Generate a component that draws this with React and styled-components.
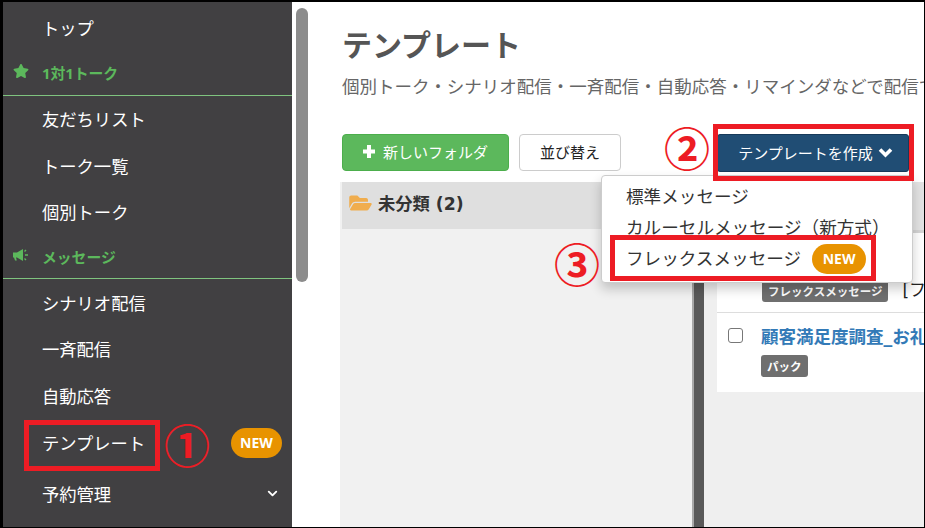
import styled, { createGlobalStyle } from "styled-components";
import { FaStar, FaFolderOpen } from "react-icons/fa";
import { LuChevronDown } from "react-icons/lu";

const FONT = `"Open Sans", "Noto Sans CJK JP", "Noto Sans", sans-serif`;
const LATIN_WIDE = `"DejaVu Sans", "Noto Sans CJK JP", sans-serif`;
const RED = "#ed1c24";

const GlobalStyle = createGlobalStyle`
  html, body {
    margin: 0;
    padding: 0;
    background: #000;
  }
  * {
    box-sizing: border-box;
  }
`;

const Frame = styled.div`
  position: relative;
  width: 925px;
  height: 528px;
  overflow: hidden;
  display: flex;
  border-top: 2px solid #000;
  border-left: 3px solid #000;
  border-right: 1px solid #000;
  border-bottom: 1px solid #000;
  background: #fff;
  font-family: ${FONT};
`;

const Sidebar = styled.nav`
  width: 289px;
  flex: none;
  padding-top: 2px;
  background: #414042;
`;

const NavRow = styled.div`
  height: ${(p) => p.$height || 46.5}px;
  margin-bottom: ${(p) => p.$after || 0}px;
  display: flex;
  align-items: center;
  padding: 0 10px 0 39px;
  color: #fff;
  font-size: 17.3px;
`;

const NavGroup = styled.div`
  height: ${(p) => p.$height}px;
  display: flex;
  align-items: center;
  padding-left: 10px;
  border-bottom: 1px solid #7fc47f;
  color: #5cb85c;
  font-size: 14.8px;
  font-weight: 700;
  svg {
    width: 16px;
    height: 16px;
    margin-right: 13px;
    transform: translateY(-2px);
  }
`;

const NewBadge = styled.span`
  display: inline-flex;
  align-items: center;
  justify-content: center;
  width: ${(p) => p.$width || 51}px;
  height: 30px;
  margin-left: ${(p) => p.$gap || "auto"};
  margin-top: ${(p) => p.$drop || 0}px;
  border-radius: 15px;
  background: #e89300;
  color: #fff;
  font-size: 14px;
  font-weight: 700;
`;

const Arrow = styled(LuChevronDown)`
  margin-left: auto;
  margin-right: 2px;
  width: 15px;
  height: 15px;
  stroke-width: 3;
`;

const Gutter = styled.div`
  width: 18px;
  flex: none;
  padding: 6px 2px 0 4px;
`;

const Thumb = styled.div`
  height: 274px;
  border-radius: 6px;
  background: #8c8c8c;
`;

const Main = styled.main`
  flex: 1;
  min-width: 0;
  display: flex;
  flex-direction: column;
  padding-top: 21px;
`;

const Title = styled.h1`
  margin: 0 0 0 32px;
  height: 45px;
  line-height: 44px;
  color: #555;
  font-size: 30px;
  font-weight: 700;
`;

const Lead = styled.p`
  margin: 0 0 0 32px;
  height: 36px;
  line-height: 36px;
  color: #666;
  font-size: 17.5px;
  white-space: nowrap;
`;

const Toolbar = styled.div`
  display: flex;
  align-items: flex-start;
  gap: 10px;
  margin: 30px 0 10px 32px;
  height: 38px;
`;

const Button = styled.button`
  height: 37px;
  display: inline-flex;
  align-items: center;
  justify-content: center;
  gap: 8px;
  padding: 0 0 2px;
  width: ${(p) => p.$width}px;
  border: 1px solid #ccc;
  border-radius: 4px;
  background: #fff;
  color: #222;
  font-family: ${FONT};
  font-size: 15px;
`;

const GreenButton = styled(Button)`
  border-color: #4cae4c;
  background: #5cb85c;
  color: #fff;
`;

const CreateButton = styled(Button)`
  height: 38px;
  gap: 5px;
  margin-left: 86px;
  padding-left: 5px;
  border: 1px solid #173a5a;
  border-radius: 3px;
  background: #204d74;
  color: #fff;
`;

const Panes = styled.div`
  flex: 1;
  min-height: 0;
  display: flex;
`;

const FolderPane = styled.section`
  width: 352px;
  margin-left: 30px;
  flex: none;
  display: flex;
  flex-direction: column;
  background: #f1f1f1;
`;

const FolderHead = styled.div`
  height: 47px;
  margin-left: 2px;
  display: flex;
  align-items: center;
  gap: 6px;
  padding: 0 0 6px 7px;
  background: #dfdfdf;
  color: #333;
  font-family: ${LATIN_WIDE};
  font-size: 17.3px;
  font-weight: 700;
  svg {
    width: 23px;
    height: 20px;
    color: #f0ad4e;
  }
`;

const Splitter = styled.div`
  width: 12px;
  flex: none;
  border-left: 2px solid #a8a8a8;
  background: #595959;
`;

const ListPane = styled.section`
  flex: 1;
  min-width: 0;
  padding-left: 13px;
  background: #efefef;
`;

const ListHead = styled.div`
  height: 51px;
  border-bottom: 3px solid #d4d4d4;
  background: #e3e3e3;
`;

const Card = styled.article`
  padding: ${(p) => p.$padding};
  height: ${(p) => p.$height}px;
  background: #fff;
  border-bottom: ${(p) => (p.$line ? "1px solid #ddd" : "0")};
`;

const CardRow = styled.div`
  display: flex;
  align-items: ${(p) => p.$align || "flex-start"};
  gap: ${(p) => p.$gap || 14}px;
  white-space: nowrap;
  color: #222;
  font-size: 17px;
`;

const Tag = styled.span`
  display: inline-flex;
  align-items: center;
  height: 22px;
  padding: 0 6px;
  border-radius: 3px;
  background: #6f6f6f;
  color: #fff;
  font-size: 11.5px;
  font-weight: 700;
`;

const CardLabel = styled.span`
  font-family: ${LATIN_WIDE};
  margin-bottom: 5px;
`;

const Check = styled.span`
  flex: none;
  width: 15px;
  height: 15px;
  margin-left: 11px;
  border: 1.5px solid #777;
  border-radius: 3px;
  background: #fff;
`;

const ItemLink = styled.a`
  color: #337ab7;
  font-family: ${LATIN_WIDE};
  font-size: 17.5px;
  font-weight: 700;
  line-height: 24px;
  white-space: nowrap;
`;

const ItemBody = styled.div`
  display: flex;
  flex-direction: column;
  align-items: flex-start;
  gap: 6px;
  margin-top: -3px;
`;

const Menu = styled.ul`
  position: absolute;
  left: 598px;
  top: 173px;
  width: 312px;
  height: 108px;
  margin: 0;
  padding: 4px 0 0;
  list-style: none;
  background: #fff;
  border: 1px solid #ccc;
  border-radius: 4px;
  box-shadow: 0 6px 12px rgba(0, 0, 0, 0.2);
`;

const MenuItem = styled.li`
  height: 31px;
  display: flex;
  align-items: center;
  padding-left: 24px;
  color: #333;
  font-size: 17.6px;
  white-space: nowrap;
`;

const Marker = styled.div`
  position: absolute;
  left: ${(p) => p.$x - 3}px;
  top: ${(p) => p.$y - 2}px;
  width: ${(p) => p.$w}px;
  height: ${(p) => p.$h}px;
  border: 5px solid ${RED};
  pointer-events: none;
`;

const Step = styled.div`
  position: absolute;
  left: ${(p) => p.$x - 3}px;
  top: ${(p) => p.$y - 2}px;
  width: 44px;
  height: 44px;
  display: flex;
  align-items: center;
  justify-content: center;
  color: ${RED};
  font-family: "Noto Sans CJK JP", sans-serif;
  font-size: 46px;
  font-weight: 700;
  line-height: 44px;
`;

const Bullhorn = () => (
  <svg viewBox="0 0 16 16" fill="currentColor">
    <path d="M0 5.5h4L10 2v12L4 10.5H3l.8 3H2L1 10.5H0z" />
    <path d="M11.5 4.5 13 3M12 8h3M11.5 11.5 13 13" stroke="currentColor" strokeWidth="1.4" fill="none" />
  </svg>
);

const HeavyChevron = () => (
  <svg width="15" height="13" viewBox="0 0 15 13">
    <path d="M2 3.5 7.5 9 13 3.5" fill="none" stroke="currentColor" strokeWidth="3.6" />
  </svg>
);

const HeavyPlus = () => (
  <svg width="12" height="13" viewBox="0 0 12 13" fill="currentColor">
    <path d="M4 0h4v4.5h4v4H8V13H4V8.5H0v-4h4z" />
  </svg>
);

const TOP_ITEMS = ["友だちリスト", "トーク一覧", "個別トーク"];
const MESSAGE_ITEMS = ["シナリオ配信", "一斉配信", "自動応答"];

export default function App() {
  return (
    <Frame>
      <GlobalStyle />
      <Sidebar>
        <NavRow>トップ</NavRow>
        <NavGroup $height={45}>
          <FaStar />
          1対1トーク
        </NavGroup>
        {TOP_ITEMS.map((label) => (
          <NavRow key={label}>{label}</NavRow>
        ))}
        <NavGroup $height={44}>
          <Bullhorn />
          メッセージ
        </NavGroup>
        {MESSAGE_ITEMS.map((label) => (
          <NavRow key={label}>{label}</NavRow>
        ))}
        <NavRow $height={48} $after={4}>
          テンプレート
          <NewBadge>NEW</NewBadge>
        </NavRow>
        <NavRow>
          予約管理
          <Arrow />
        </NavRow>
      </Sidebar>
      <Gutter>
        <Thumb />
      </Gutter>
      <Main>
        <Title>テンプレート</Title>
        <Lead>個別トーク・シナリオ配信・一斉配信・自動応答・リマインダなどで配信できるテンプレート</Lead>
        <Toolbar>
          <GreenButton $width={167}>
            <HeavyPlus />
            新しいフォルダ
          </GreenButton>
          <Button $width={102}>並び替え</Button>
          <CreateButton $width={192}>
            テンプレートを作成
            <HeavyChevron />
          </CreateButton>
        </Toolbar>
        <Panes>
          <FolderPane>
            <FolderHead>
              <FaFolderOpen />
              未分類 (2)
            </FolderHead>
          </FolderPane>
          <Splitter />
          <ListPane>
            <ListHead />
            <Card $height={80} $line $padding="43px 0 0 45px">
              <CardRow $align="center">
                <Tag>フレックスメッセージ</Tag>
                <CardLabel>[フ</CardLabel>
              </CardRow>
            </Card>
            <Card $height={79} $padding="15px 0 0 0">
              <CardRow $gap={18}>
                <Check />
                <ItemBody>
                  <ItemLink>顧客満足度調査_お礼</ItemLink>
                  <Tag>パック</Tag>
                </ItemBody>
              </CardRow>
            </Card>
          </ListPane>
        </Panes>
      </Main>
      <Menu>
        <MenuItem>標準メッセージ</MenuItem>
        <MenuItem>カルーセルメッセージ（新方式）</MenuItem>
        <MenuItem>
          フレックスメッセージ
          <NewBadge $gap="11px" $width={54} $drop={2}>NEW</NewBadge>
        </MenuItem>
      </Menu>
      <Marker $x={24} $y={420} $w={136} $h={51} />
      <Step $x={165} $y={421}>①</Step>
      <Marker $x={713} $y={124} $w={201} $h={57} />
      <Step $x={665} $y={124}>②</Step>
      <Marker $x={610} $y={235} $w={266} $h={46} />
      <Step $x={555} $y={240}>③</Step>
    </Frame>
  );
}
